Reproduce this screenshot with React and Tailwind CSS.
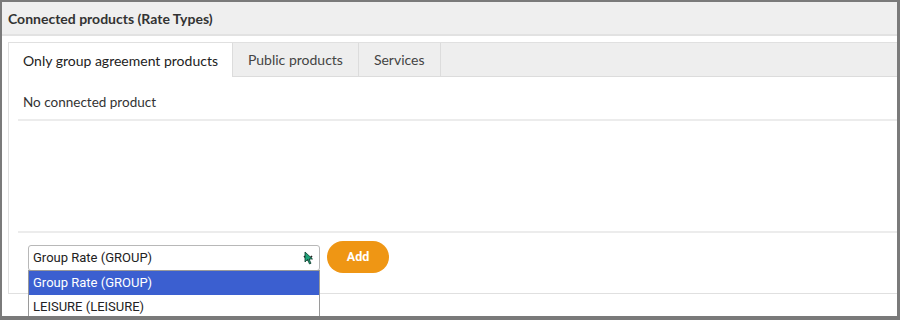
import { useState } from 'react';

const tabs = ['Only group agreement products', 'Public products', 'Services'];
const rateTypes = ['Group Rate (GROUP)', 'LEISURE (LEISURE)'];

const App = () => {
  const [activeTab, setActiveTab] = useState(0);
  const [selected, setSelected] = useState(0);

  return (
    <div className="h-[320px] w-[900px] overflow-hidden border-t-2 border-l-2 border-r-[3px] border-b-4 border-[#7a7a7a] bg-white font-['Lato','Open_Sans',sans-serif] text-[#333]">
      {/* Header */}
      <div className="flex h-[34px] items-center border-b-2 border-[#e2e2e2] bg-[#efefef] px-[6px]">
        <h2 className="text-[14px] font-bold text-[#333]">Connected products (Rate Types)</h2>
      </div>

      {/* Panel */}
      <div className="ml-[6px] mt-[6px] h-[252px] border border-[#e0e0e0] border-r-0">
        {/* Tabs */}
        <div className="flex h-[34px] border-b border-[#dcdcdc] bg-[#eeeeee]">
          {tabs.map((tab, i) => (
            <button
              key={tab}
              onClick={() => setActiveTab(i)}
              className={
                i === activeTab
                  ? 'h-[34px] border-r border-[#dcdcdc] bg-white px-[14px] text-[14px] text-[#222]'
                  : 'h-[33px] border-r border-[#dcdcdc] px-[15px] text-[14px] text-[#444]'
              }
            >
              {tab}
            </button>
          ))}
        </div>

        {/* Content */}
        <div className="pl-[9px]">
          <div className="flex h-[44px] items-center border-b-2 border-[#ececec] pl-[5px] pt-[8px] text-[13.5px] text-[#333]">
            No connected product
          </div>
          <div className="h-[112px] border-b-2 border-[#ececec]" />

          {/* Add row */}
          <div className="flex items-center gap-[7px] pl-[10px] pt-[8px]">
            <div className="relative mt-[2px]">
              <div className="flex h-[26px] w-[292px] items-center justify-between rounded-[3px] border border-[#b8b8b8] bg-white pl-[4px] pr-[6px] font-['Roboto',sans-serif] text-[13px] text-[#222]">
                <span>{rateTypes[selected]}</span>
                <span className="relative flex items-center">
                  <svg width="10" height="8" viewBox="0 0 10 8">
                    <path d="M1 2 L5 6 L9 2" stroke="#222" strokeWidth="1.6" fill="none" />
                  </svg>
                  {/* Mouse cursor */}
                  <svg className="absolute left-[1px] top-[-3px]" width="10" height="15" viewBox="0 0 10 15">
                    <path d="M1 1 L1 11 L3.5 8.5 L5.5 13 L7 12.3 L5 8 L8.5 8 Z" fill="#1fa37a" stroke="#0b3b2b" strokeWidth="0.8" />
                  </svg>
                </span>
              </div>

              {/* Dropdown list */}
              <ul className="absolute left-0 top-[25px] z-10 w-[292px] border border-[#9a9a9a] bg-white font-['Roboto',sans-serif] text-[13px]">
                {rateTypes.map((type, i) => (
                  <li
                    key={type}
                    onClick={() => setSelected(i)}
                    className={
                      i === selected
                        ? 'flex h-[24px] items-center bg-[#3b5fd0] pl-[4px] text-white'
                        : 'flex h-[24px] items-center pl-[4px] text-[#222]'
                    }
                  >
                    {type}
                  </li>
                ))}
              </ul>
            </div>

            <button className="h-[32px] w-[62px] rounded-full bg-[#ef9614] font-['Roboto',sans-serif] text-[12.5px] font-bold text-white">
              Add
            </button>
          </div>
        </div>
      </div>
    </div>
  );
};

export default App;
